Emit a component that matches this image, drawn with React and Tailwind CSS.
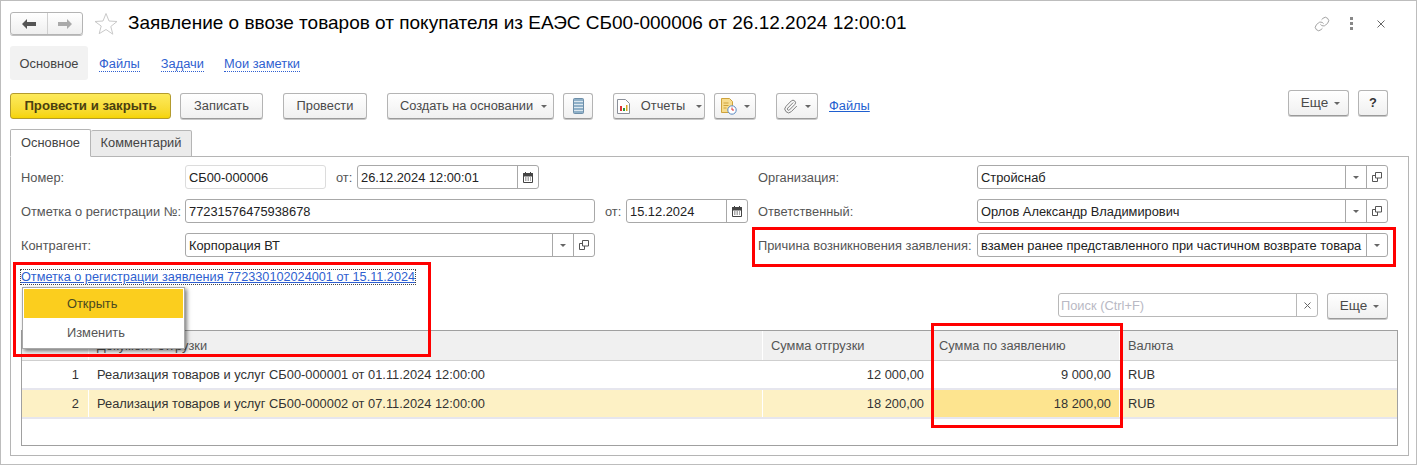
import React from "react";
import { Paperclip, Link } from "lucide-react";

/* small drawings used by the form */
const Caret = ({ color = "#666" }) => (
  <svg width="6" height="3" viewBox="0 0 6 3"><path d="M0 0h6L3 3z" fill={color} /></svg>
);

const CalendarIcon = () => (
  <svg width="10" height="11" viewBox="0 0 10 11">
    <path d="M0.500 1.500h9v9h-9z" fill="#fff" stroke="#444" />
    <path d="M0.500 1.500h9v2.500h-9z" fill="#444" stroke="#444" />
    <path d="M2.500 0v2M7.500 0v2" stroke="#444" />
    <path d="M2 6h1.500M4.500 6H6M7 6h1M2 8h1.500M4.500 8H6M7 8h1" stroke="#555" />
  </svg>
);

const OpenIcon = () => (
  <svg width="10" height="10" viewBox="0 0 10 10" fill="none" stroke="#555">
    <path d="M3.500 0.500h6v5.500h-6z" />
    <path d="M3.500 3.500H0.500v6h5V6" />
  </svg>
);

const Star = () => (
  <svg width="24" height="23" viewBox="0 0 24 23" fill="none" stroke="#c9c9c9">
    <path d="M12 1.500l3 7.500 8 .5-6.200 5 2 7.700L12 17.500l-6.800 4.200 2-7.700L1 9.500l8-.5z" />
  </svg>
);

const Btn = ({ className = "", children }) => (
  <div className={"h-[26px] flex items-center justify-center rounded-[3px] border border-[#b4b4b4] border-b-[#9a9a9a] bg-gradient-to-b from-white to-[#f0f0f0] shadow-[0_1px_0_#c8c8c8] text-[#4a4a4a] " + className}>
    {children}
  </div>
);

const Field = ({ value, className = "", light, buttons = [] }) => (
  <div className={"h-[24px] flex items-stretch rounded-[3px] border bg-white " + (light ? "border-[#dcdcdc] " : "border-[#a8a8a8] ") + className}>
    <div className="flex-1 pl-[3px] leading-[23px] text-[#222] whitespace-nowrap overflow-hidden">{value}</div>
    {buttons.map((b, i) => (
      <div key={i} className="w-[21px] border-l border-[#a8a8a8] flex items-center justify-center">
        {b === "caret" && <Caret />}
        {b === "open" && <OpenIcon />}
        {b === "cal" && <CalendarIcon />}
      </div>
    ))}
  </div>
);

const Label = ({ children, className = "" }) => (
  <div className={"h-[24px] leading-[25px] text-[#555] whitespace-nowrap " + className}>{children}</div>
);

const rows = [
  { n: 1, doc: "Реализация товаров и услуг СБ00-000001 от 01.11.2024 12:00:00", sum: "12 000,00", decl: "9 000,00" },
  { n: 2, doc: "Реализация товаров и услуг СБ00-000002 от 07.11.2024 12:00:00", sum: "18 200,00", decl: "18 200,00", active: true },
];

export default function App() {
  return (
    <div className="relative w-[1422px] h-[467px] bg-white overflow-hidden text-[12.85px] font-['Liberation_Sans',Arial,sans-serif]">
      <div className="w-[1417px] h-[465px] border border-[#bdbdbd] pt-[11px] pl-[9px]">

        {/* HEADER */}
        <div className="h-[23px] flex items-center">
          <div className="w-[73px] h-[23px] flex rounded-[3px] border border-[#b4b4b4] bg-gradient-to-b from-white to-[#efefef] shadow-[0_1px_0_#c0c0c0]">
            <div className="w-[37px] border-r border-[#d0d0d0] flex items-center justify-center">
              <svg width="14" height="10" viewBox="0 0 14 10"><path d="M0 5l5-5v3h9v4H5v3z" fill="#555" /></svg>
            </div>
            <div className="flex-1 flex items-center justify-center">
              <svg width="14" height="10" viewBox="0 0 14 10"><path d="M14 5L9 0v3H0v4h9v3z" fill="#aaa" /></svg>
            </div>
          </div>
          <div className="ml-[11px]"><Star /></div>
          <div className="ml-[10px] text-[19px] text-black whitespace-nowrap">
            Заявление о ввозе товаров от покупателя из ЕАЭС СБ00-000006 от 26.12.2024 12:00:01
          </div>
          <div className="ml-auto flex items-center mr-[31px]">
            <Link size={16} color="#8a8a8a" strokeWidth={1.2} />
            <div className="ml-[20px] flex flex-col gap-[2px]">
              <div className="w-[3px] h-[3px] bg-[#888]" />
              <div className="w-[3px] h-[3px] bg-[#888]" />
              <div className="w-[3px] h-[3px] bg-[#888]" />
            </div>
            <svg className="ml-[24px]" width="8" height="8" viewBox="0 0 8 8" stroke="#666"><path d="M0.500 0.500l7 7M7.500 0.500l-7 7" /></svg>
          </div>
        </div>

        {/* SECTION LINKS */}
        <div className="mt-[11px] h-[34px] flex items-center">
          <div className="w-[78px] h-[34px] pt-px bg-[#f2f2f2] rounded-[3px] flex items-center justify-center text-[#444]">Основное</div>
          <div className="ml-[11px] mt-[2px] text-[#2f5fd0] border-b border-dotted border-[#2f5fd0] leading-[14px]">Файлы</div>
          <div className="ml-[21px] mt-[2px] text-[#2f5fd0] border-b border-dotted border-[#2f5fd0] leading-[14px]">Задачи</div>
          <div className="ml-[20px] mt-[2px] text-[#2f5fd0] border-b border-dotted border-[#2f5fd0] leading-[14px]">Мои заметки</div>
        </div>

        {/* TOOLBAR */}
        <div className="mt-[10px] h-[29px] flex items-start">
          <div className="mt-[3px] flex items-center">
            <div className="w-[161px] h-[26px] flex items-center justify-center rounded-[3px] border border-[#b39b2e] bg-gradient-to-b from-[#fdea5a] to-[#f5d400] font-bold text-[13.2px] text-[#4a3f10]">Провести и закрыть</div>
            <Btn className="ml-[9px] w-[83px]">Записать</Btn>
            <Btn className="ml-[20px] w-[84px]">Провести</Btn>
            <Btn className="ml-[20px] w-[167px] pl-[6px] gap-[8px]">Создать на основании <Caret /></Btn>
            <Btn className="ml-[9px] w-[30px]">
              <svg width="11" height="16" viewBox="0 0 11 16">
                <rect x="0.500" y="0.500" width="10" height="15" rx="1" fill="#8fb0c8" stroke="#6d8ea8" />
                <path d="M1 3.500h9M1 6.500h9M1 9.500h9M1 12.500h9" stroke="#dbe7ef" />
              </svg>
            </Btn>
            <Btn className="ml-[20px] w-[92px] pl-[1px] gap-[11px]">
              <svg width="13" height="15" viewBox="0 0 13 15">
                <path d="M0.500 0.500h8l4 4v10H0.500z" fill="#fff" stroke="#8a8f98" />
                <path d="M3 7h2v5H3z" fill="#d33" /><path d="M6 9h2v3H6z" fill="#2a9a3c" /><path d="M9 6h1.500v6H9z" fill="#d9a520" />
              </svg>
              <span>Отчеты</span> <Caret />
            </Btn>
            <Btn className="ml-[9px] w-[42px] gap-[7px]">
              <svg width="16" height="17" viewBox="0 0 16 17">
                <path d="M0.500 0.500h8l3 3v11h-11z" fill="#f7dc8e" stroke="#cda23c" />
                <path d="M2.500 5h5M2.500 7.500h5M2.500 10h3" stroke="#cda23c" />
                <circle cx="11" cy="12" r="4.200" fill="#fff" stroke="#5a88c0" />
                <path d="M11 9.500V12h2" stroke="#d33" fill="none" />
              </svg>
              <Caret />
            </Btn>
            <Btn className="ml-[20px] w-[42px] gap-[7px]">
              <Paperclip size={15} color="#808080" strokeWidth={1.6} />
              <Caret />
            </Btn>
            <div className="ml-[11px] text-[#1f5fd0] underline">Файлы</div>
          </div>
          <div className="ml-auto mr-[28px] flex">
            <Btn className="w-[61px] pl-[4px] gap-[6px] text-[13.5px]"><span>Еще</span> <Caret /></Btn>
            <Btn className="ml-[9px] w-[30px] font-bold text-[#333]">?</Btn>
          </div>
        </div>

        {/* TABS */}
        <div className="mt-[10px] h-[28px] flex items-end relative z-10 -mb-px">
          <div className="w-[81px] h-[28px] pb-px border border-[#b5b5b5] border-b-white bg-white rounded-t-[2px] flex items-center justify-center text-[#444]">Основное</div>
          <div className="w-[101px] h-[27px] pb-px border border-l-0 border-[#b5b5b5] bg-[#ebebeb] rounded-t-[2px] flex items-center justify-center text-[#444]">Комментарий</div>
        </div>

        {/* PANEL */}
        <div className="w-[1399px] h-[300px] border border-[#b5b5b5] pt-[8px] pl-[10px]">

          <div className="flex">
            <div className="w-[727px] flex">
              <Label className="w-[164px]">Номер:</Label>
              <Field value="СБ00-000006" light className="w-[141px]" />
              <Label className="ml-[10px] w-[21px]">от:</Label>
              <Field value="26.12.2024 12:00:01" className="w-[182px]" buttons={["cal"]} />
            </div>
            <Label className="ml-[10px] w-[219px]">Организация:</Label>
            <Field value="Стройснаб" className="w-[411px]" buttons={["caret", "open"]} />
          </div>

          <div className="mt-[10px] flex">
            <div className="w-[727px] flex">
              <Label className="w-[164px]">Отметка о регистрации №:</Label>
              <Field value="77231576475938678" className="w-[410px]" />
              <Label className="ml-[10px] w-[21px]">от:</Label>
              <Field value="15.12.2024" className="w-[122px]" buttons={["cal"]} />
            </div>
            <Label className="ml-[10px] w-[219px]">Ответственный:</Label>
            <Field value="Орлов Александр Владимирович" className="w-[411px]" buttons={["caret", "open"]} />
          </div>

          <div className="mt-[10px] flex">
            <div className="w-[727px] flex">
              <Label className="w-[164px]">Контрагент:</Label>
              <Field value="Корпорация ВТ" className="w-[410px]" buttons={["caret", "open"]} />
            </div>
            <Label className="ml-[10px] w-[219px]">Причина возникновения заявления:</Label>
            <Field value="взамен ранее представленного при частичном возврате товара" className="w-[411px]" buttons={["caret"]} />
          </div>

          <div className="mt-[13px] h-[14px] flex">
            <div className="leading-[14px] text-[12.7px] text-[#2f5fd0] underline outline-1 outline-dotted outline-[#444] whitespace-nowrap">
              Отметка о регистрации заявления 772330102024001 от 15.11.2024
            </div>
          </div>

          <div className="mt-[9px] h-[24px] flex justify-end pr-[20px]">
            <div className="w-[260px] h-[24px] flex rounded-[3px] border border-[#b8b8b8]">
              <div className="flex-1 pl-[2px] leading-[23px] text-[#b9b9c4]">Поиск (Ctrl+F)</div>
              <div className="w-[21px] border-l border-[#b8b8b8] flex items-center justify-center">
                <svg width="7" height="7" viewBox="0 0 7 7" stroke="#666"><path d="M0.500 0.500l6 6M6.500 0.500l-6 6" /></svg>
              </div>
            </div>
            <Btn className="ml-[9px] w-[61px] pl-[4px] gap-[6px] text-[13.5px]"><span>Еще</span> <Caret /></Btn>
          </div>

          {/* TABLE */}
          <div className="mt-[13px] w-[1377px] h-[116px] border border-[#a0a0a0] text-[#333]">
            <div className="h-[30px] flex bg-[#f0f0f0] border-b border-[#cfcfcf] leading-[29px] text-[#555]">
              <div className="w-[67px] border-r border-white" />
              <div className="w-[674px] pl-[8px] border-r border-white">Документ отгрузки</div>
              <div className="w-[170px] pl-[8px] border-r border-white">Сумма отгрузки</div>
              <div className="w-[187px] pl-[6px] border-r border-white">Сумма по заявлению</div>
              <div className="flex-1 pl-[8px]">Валюта</div>
            </div>
            {rows.map((r) => (
              <div key={r.n} className={"flex border-b-2 border-[#e6e6ee] h-[29px] leading-[28px] " + (r.active ? "bg-[#fdf1c5]" : "bg-white")}>
                <div className="w-[67px] pr-[9px] text-right border-r border-white">{r.n}</div>
                <div className="w-[674px] pl-[8px] border-r border-white whitespace-nowrap">{r.doc}</div>
                <div className="w-[170px] pr-[8px] text-right border-r border-white">{r.sum}</div>
                <div className={"w-[187px] pr-[8px] text-right border-r border-white " + (r.active ? "bg-[#fde48f]" : "")}>{r.decl}</div>
                <div className="flex-1 pl-[8px]">RUB</div>
              </div>
            ))}
          </div>
        </div>
      </div>

      {/* POPUP MENU */}
      <div className="absolute left-[22px] top-[287px] w-[163px] h-[62px] bg-white border border-[#a8a8a8] shadow-[2px_2px_4px_rgba(0,0,0,0.5)] p-px text-[#555]">
        <div className="h-[29px] bg-[#fbce1e] pl-[43px] leading-[29px] text-[#4a4a20]">Открыть</div>
        <div className="h-[30px] pl-[43px] leading-[30px]">Изменить</div>
      </div>

      {/* RED MARKS */}
      <div className="absolute left-[13px] top-[262px] w-[418px] h-[95px] border-[3px] border-[#f00] pointer-events-none" />
      <div className="absolute left-[752px] top-[227px] w-[644px] h-[40px] border-[3px] border-[#f00] pointer-events-none" />
      <div className="absolute left-[931px] top-[323px] w-[192px] h-[105px] border-[3px] border-[#f00] pointer-events-none" />
    </div>
  );
}
